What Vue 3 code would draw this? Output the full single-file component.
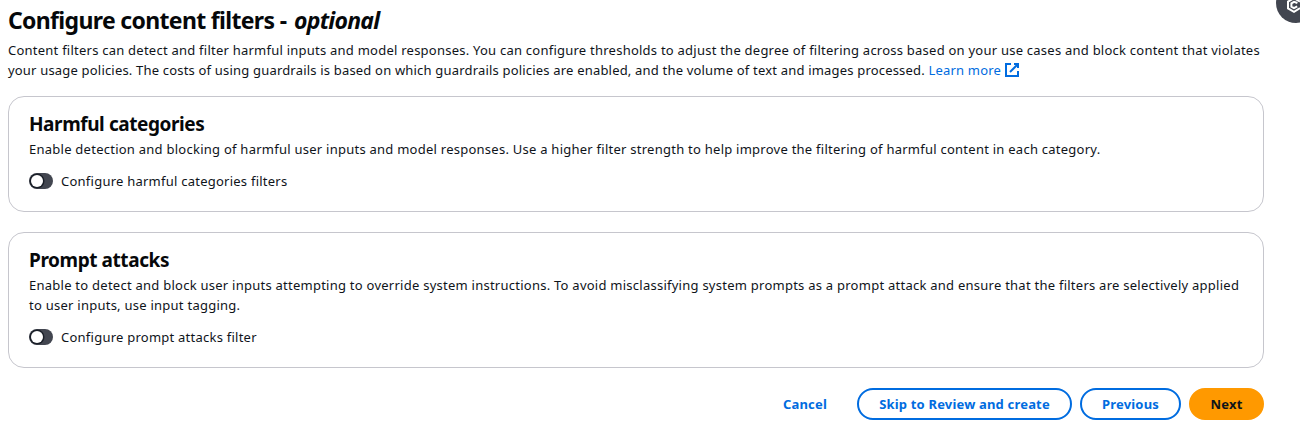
<template>
  <main class="page">
    <header class="page-header">
      <h1>Configure content filters <span class="dash">-</span> <i>optional</i></h1>
      <p>
        <span class="line">Content filters can detect and filter harmful inputs and model responses. You can configure thresholds to adjust the degree of filtering across based on your use cases and block content that violates</span>
        <span class="line line-last">your usage policies. The costs of using guardrails is based on which guardrails policies are enabled, and the volume of text and images processed. <a href="#" class="link">Learn more<svg class="external" viewBox="0 0 16 16"><path d="M10 2h4v4" /><path d="m6 10 8-8" /><path d="M14 9.05V14H2V2h5" /></svg></a></span>
      </p>
    </header>

    <section v-for="card in cards" :key="card.id" :class="['card', card.id]">
      <h2>{{ card.title }}</h2>
      <p>
        <span v-for="(line, i) in card.lines" :key="i" class="line">{{ line }}</span>
      </p>
      <label class="toggle">
        <input v-model="card.enabled" type="checkbox" />
        <span class="toggle-track"><span class="toggle-handle"></span></span>
        <span class="toggle-label">{{ card.label }}</span>
      </label>
    </section>

    <footer class="actions">
      <button class="btn btn-link">Cancel</button>
      <button class="btn btn-skip">Skip to Review and create</button>
      <button class="btn btn-prev">Previous</button>
      <button class="btn btn-primary">Next</button>
    </footer>

    <button class="help">
      <svg viewBox="0 0 16 16"><path d="M14 11.2 8 14.8 2 11.4V4.6L8 1.2l6 3.4" /><path d="M11.4 6 8 4.8 5.4 6.4v3.2L8 11.2l3.2-1.8" /></svg>
    </button>
  </main>
</template>

<script setup>
import { ref } from 'vue'

const cards = ref([
  {
    id: 'harmful',
    title: 'Harmful categories',
    lines: [
      'Enable detection and blocking of harmful user inputs and model responses. Use a higher filter strength to help improve the filtering of harmful content in each category.',
    ],
    label: 'Configure harmful categories filters',
    enabled: false,
  },
  {
    id: 'prompt',
    title: 'Prompt attacks',
    lines: [
      'Enable to detect and block user inputs attempting to override system instructions. To avoid misclassifying system prompts as a prompt attack and ensure that the filters are selectively applied',
      'to user inputs, use input tagging.',
    ],
    label: 'Configure prompt attacks filter',
    enabled: false,
  },
])
</script>

<style>
body {
  margin: 0;
  overflow: hidden;
  background: #fff;
}
</style>

<style scoped>
.page {
  position: relative;
  box-sizing: border-box;
  width: 1300px;
  height: 427px;
  padding: 6px 36px 0 8px;
  overflow: hidden;
  font-family: "Noto Sans", "Open Sans", sans-serif;
  font-size: 13px;
  line-height: 20px;
  color: #0f141a;
}

.page-header {
  height: 90px;
}

h1,
h2,
p {
  margin: 0;
}

h1,
h2 {
  color: #06080a;
}

h1 {
  font-size: 23px;
  line-height: 29px;
  letter-spacing: -0.66px;
  white-space: nowrap;
}

h1 .dash {
  display: inline-block;
  width: 8px;
  margin-right: 1px;
}

h1 i {
  letter-spacing: -0.75px;
}

.page-header p {
  margin-top: 5px;
}

.line {
  display: block;
  letter-spacing: 0.237px;
  white-space: nowrap;
}

.line-last {
  letter-spacing: 0.188px;
}

.link {
  color: #006ce0;
  text-decoration: none;
}

.external {
  width: 16px;
  height: 16px;
  margin-left: 3px;
  vertical-align: -3px;
  fill: none;
  stroke: currentColor;
  stroke-width: 2;
}

.card {
  box-sizing: border-box;
  height: 116px;
  margin-bottom: 20px;
  padding: 15px 20px 0;
  border: 1px solid #c6c6cd;
  border-radius: 16px;
}

.card.prompt {
  height: 136px;
}

.card .line {
  letter-spacing: 0.25px;
}

h2 {
  font-size: 19px;
  line-height: 24px;
  letter-spacing: -0.42px;
}

.card p {
  margin-top: 3px;
}

.toggle {
  display: flex;
  align-items: center;
  width: max-content;
  height: 20px;
  margin-top: 12px;
}

.toggle input {
  display: none;
}

.toggle-label {
  letter-spacing: 0.24px;
}

.toggle-track {
  box-sizing: border-box;
  display: flex;
  width: 24px;
  height: 16px;
  margin-right: 8px;
  padding: 2px;
  border-radius: 8px;
  background: #424650;
}

.toggle-handle {
  width: 12px;
  height: 12px;
  border-radius: 50%;
  background: #fff;
  box-shadow: 0 0 0 1.5px #1a1f28;
}

.toggle input:checked + .toggle-track {
  justify-content: flex-end;
  background: #006ce0;
}

.actions {
  display: flex;
  justify-content: flex-end;
  gap: 8px;
}

.btn {
  box-sizing: border-box;
  height: 32px;
  padding: 0;
  border: 2px solid #006ce0;
  border-radius: 20px;
  background: #fff;
  color: #006ce0;
  font-family: inherit;
  font-size: 13px;
  font-weight: 700;
  line-height: 20px;
  letter-spacing: 0.18px;
  white-space: nowrap;
}

.btn-link {
  width: 88px;
  border-color: transparent;
}

.btn-skip {
  width: 215px;
}

.btn-prev {
  width: 101px;
}

.btn-primary {
  width: 75px;
  border-color: #ff9900;
  background: #ff9900;
  color: #0f141a;
}

.help {
  position: absolute;
  top: -17px;
  left: 1276px;
  width: 40px;
  height: 40px;
  padding: 0;
  border: 0;
  border-radius: 50%;
  background: #424650;
}

.help svg {
  position: absolute;
  top: 14px;
  left: 10px;
  width: 16px;
  height: 16px;
  fill: none;
  stroke: #fff;
  stroke-width: 2;
}
</style>
